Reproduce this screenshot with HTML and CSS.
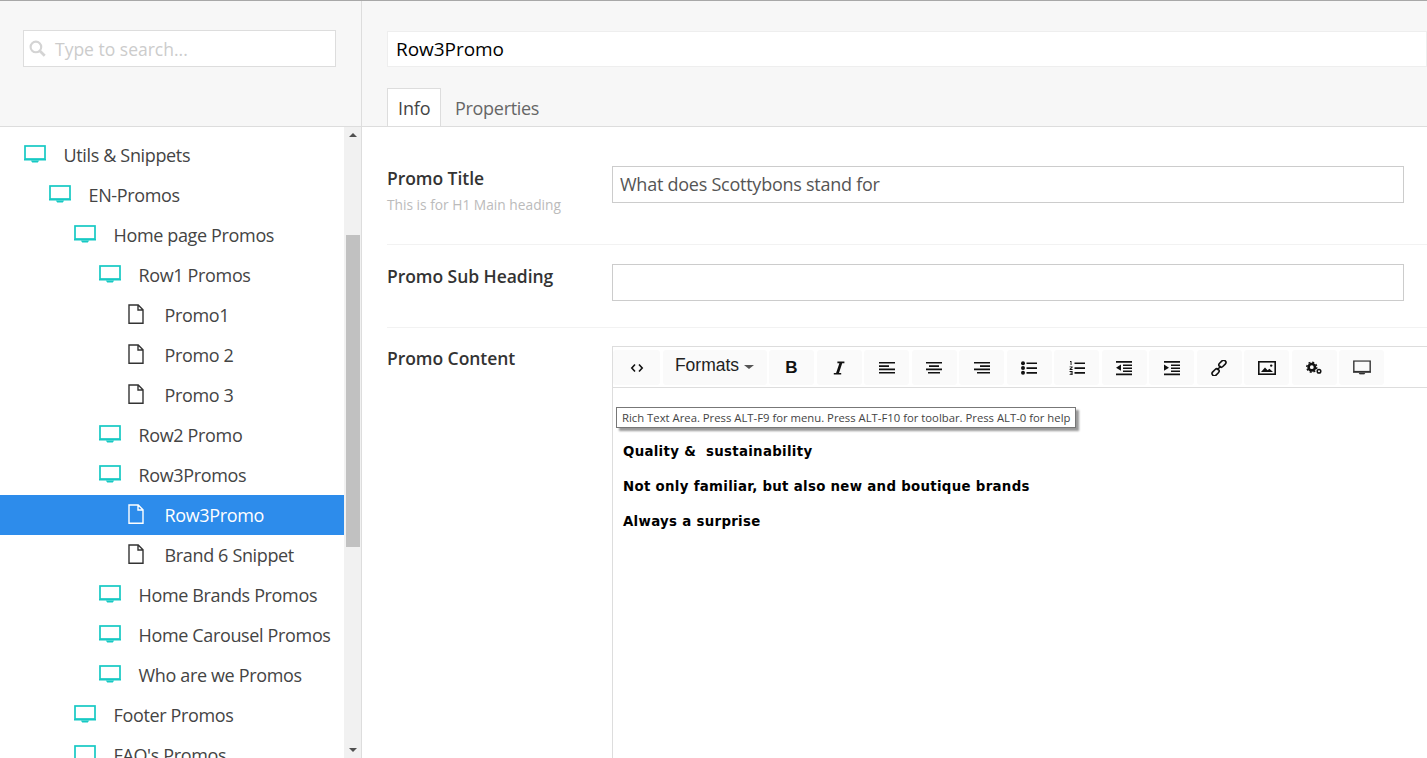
FILE: index.html
```html
<!DOCTYPE html>
<html lang="en">
<head>
<meta charset="utf-8">
<title>Row3Promo</title>
<link rel="stylesheet" href="styles.css">
</head>
<body>
<svg class="defs" width="0" height="0" aria-hidden="true">
  <defs>
    <symbol id="monitor" viewBox="0 0 22 18">
      <rect x="1" y="1" width="20" height="13" fill="none" stroke="currentColor" stroke-width="1.7"/>
      <path d="M0 14h22v1.4H0zM7 15.8h8l-1.2 1.8H8.2z" fill="currentColor"/>
    </symbol>
    <symbol id="file" viewBox="0 0 16 20">
      <path d="M1 1h9.2L15 5.8v13.4H1z M10 1v5h5" fill="none" stroke="currentColor" stroke-width="1.4"/>
    </symbol>
  </defs>
</svg>
<div class="app">
  <aside class="side">
    <div class="side-head">
      <div class="search">
        <svg class="search-icon" viewBox="0 0 16 16"><circle cx="6.5" cy="6.5" r="5" fill="none" stroke="currentColor" stroke-width="2"/><path d="M10.3 10.3l4.5 4.5" stroke="currentColor" stroke-width="2.6"/></svg>
        <span>Type to search...</span>
      </div>
    </div>
    <div class="tree-wrap">
      <ul class="tree">
        <li class="node l0"><svg class="ic-mon"><use href="#monitor"/></svg><span>Utils &amp; Snippets</span></li>
        <li class="node l1"><svg class="ic-mon"><use href="#monitor"/></svg><span>EN-Promos</span></li>
        <li class="node l2"><svg class="ic-mon"><use href="#monitor"/></svg><span>Home page Promos</span></li>
        <li class="node l3"><svg class="ic-mon"><use href="#monitor"/></svg><span>Row1 Promos</span></li>
        <li class="node l4"><svg class="ic-file"><use href="#file"/></svg><span>Promo1</span></li>
        <li class="node l4"><svg class="ic-file"><use href="#file"/></svg><span>Promo 2</span></li>
        <li class="node l4"><svg class="ic-file"><use href="#file"/></svg><span>Promo 3</span></li>
        <li class="node l3"><svg class="ic-mon"><use href="#monitor"/></svg><span>Row2 Promo</span></li>
        <li class="node l3"><svg class="ic-mon"><use href="#monitor"/></svg><span>Row3Promos</span></li>
        <li class="node l4 selected"><svg class="ic-file"><use href="#file"/></svg><span>Row3Promo</span></li>
        <li class="node l4"><svg class="ic-file"><use href="#file"/></svg><span>Brand 6 Snippet</span></li>
        <li class="node l3"><svg class="ic-mon"><use href="#monitor"/></svg><span>Home Brands Promos</span></li>
        <li class="node l3"><svg class="ic-mon"><use href="#monitor"/></svg><span>Home Carousel Promos</span></li>
        <li class="node l3"><svg class="ic-mon"><use href="#monitor"/></svg><span>Who are we Promos</span></li>
        <li class="node l2"><svg class="ic-mon"><use href="#monitor"/></svg><span>Footer Promos</span></li>
        <li class="node l2"><svg class="ic-mon"><use href="#monitor"/></svg><span>FAQ's Promos</span></li>
      </ul>
      <div class="scrollbar">
        <div class="arrow-up"></div>
        <div class="thumb"></div>
        <div class="arrow-down"></div>
      </div>
    </div>
  </aside>
  <main class="main">
    <header class="main-head">
      <div class="title-input">Row3Promo</div>
      <nav class="tabs">
        <div class="tab active">Info</div>
        <div class="tab">Properties</div>
      </nav>
    </header>
    <section class="form">
      <div class="row row-title">
        <div class="label">
          <div class="label-name">Promo Title</div>
          <div class="label-hint">This is for H1 Main heading</div>
        </div>
        <div class="input">What does Scottybons stand for</div>
      </div>
      <div class="row row-sub">
        <div class="label"><div class="label-name">Promo Sub Heading</div></div>
        <div class="input"></div>
      </div>
      <div class="row row-content">
        <div class="label"><div class="label-name">Promo Content</div></div>
        <div class="editor">
          <div class="toolbar">
            <div class="btn btn-code"><svg class="ti" viewBox="0 0 16 16"><path d="M6 4.5L2.8 8 6 11.5M10 4.5L13.2 8 10 11.5" fill="none" stroke="currentColor" stroke-width="1.6"/></svg></div>
            <div class="btn btn-formats"><span>Formats</span><i class="caret"></i></div>
            <div class="btn"><span class="ti-b">B</span></div>
            <div class="btn"><svg class="ti" viewBox="0 0 16 16"><path d="M6.4 1.5h7v1.7h-2.2L8 13h2.2v1.6H2.8V13h2.3L8.4 3.2h-2z" fill="currentColor"/></svg></div>
            <div class="btn"><svg class="ti" viewBox="0 0 16 16"><path d="M0 2h16v1.6H0zM0 5.3h10v1.6H0zM0 8.6h16v1.6H0zM0 11.9h16v1.6H0z" fill="currentColor"/></svg></div>
            <div class="btn"><svg class="ti" viewBox="0 0 16 16"><path d="M0 2h16v1.6H0zM3 5.3h10v1.6H3zM0 8.6h16v1.6H0zM2 11.9h12v1.6H2z" fill="currentColor"/></svg></div>
            <div class="btn"><svg class="ti" viewBox="0 0 16 16"><path d="M0 2h16v1.6H0zM6 5.3h10v1.6H6zM0 8.6h16v1.6H0zM3 11.9h13v1.6H3z" fill="currentColor"/></svg></div>
            <div class="btn"><svg class="ti" viewBox="0 0 16 16"><path d="M5.5 2.4H16v1.7H5.5zM5.5 7.2H16v1.7H5.5zM5.5 12H16v1.7H5.5z" fill="currentColor"/><circle cx="2" cy="3.2" r="2"/><circle cx="2" cy="8" r="2"/><circle cx="2" cy="12.8" r="2"/></svg></div>
            <div class="btn"><svg class="ti" viewBox="0 0 16 16"><path d="M5.5 2.4H16v1.7H5.5zM5.5 7.2H16v1.7H5.5zM5.5 12H16v1.7H5.5z" fill="currentColor"/><path d="M1 1h1.5v4H1.6V2H1zM.6 6.4h3v1L1.9 9h1.7v.9H.6V9l1.9-1.7H.6zM.6 11h3v4h-3v-.8h2v-.8H1.2v-.6h1.4v-.9h-2z" fill="currentColor"/></svg></div>
            <div class="btn"><svg class="ti" viewBox="0 0 16 16"><path d="M0 1h16v1.7H0zM7 4.4h9v1.7H7zM7 7.4h9v1.7H7zM7 10.4h9v1.7H7zM0 13.6h16v1.7H0zM5 4.6v6.2L0 7.7z" fill="currentColor"/></svg></div>
            <div class="btn"><svg class="ti" viewBox="0 0 16 16"><path d="M0 1h16v1.7H0zM7 4.4h9v1.7H7zM7 7.4h9v1.7H7zM7 10.4h9v1.7H7zM0 13.6h16v1.7H0zM0 4.6v6.2l5-3.1z" fill="currentColor"/></svg></div>
            <div class="btn"><svg class="ti" viewBox="0 0 16 16"><g fill="none" stroke="currentColor" stroke-width="1.6"><rect x="7.4" y="1.4" width="8" height="4.6" rx="2.3" transform="rotate(-45 11.4 3.7)"/><rect x=".6" y="10" width="8" height="4.6" rx="2.3" transform="rotate(-45 4.6 12.3)"/><path d="M6 10l4-4"/></g></svg></div>
            <div class="btn"><svg class="ti ti-img" viewBox="0 0 18 14"><rect x=".8" y=".8" width="16.4" height="12.4" fill="none" stroke="currentColor" stroke-width="1.6"/><path d="M3 11l4-4.6 2.6 2.8 1.8-1.4L15 11z" fill="currentColor"/><circle cx="13.2" cy="4.6" r="1.2" fill="currentColor"/></svg></div>
            <div class="btn"><svg class="ti" viewBox="0 0 16 16"><circle cx="5.8" cy="7.2" r="3.2" fill="none" stroke="currentColor" stroke-width="2.6"/><circle cx="5.8" cy="7.2" r="5" fill="none" stroke="currentColor" stroke-width="1.4" stroke-dasharray="2 1.9"/><circle cx="13" cy="11.2" r="1.8" fill="none" stroke="currentColor" stroke-width="1.5"/></svg></div>
            <div class="btn"><svg class="ti ti-mon" viewBox="0 0 22 18"><use href="#monitor"/></svg></div>
          </div>
          <div class="editor-body">
            <div class="tooltip">Rich Text Area. Press ALT-F9 for menu. Press ALT-F10 for toolbar. Press ALT-0 for help</div>
            <p>Quality &amp;&nbsp; sustainability</p>
            <p>Not only familiar, but also new and boutique brands</p>
            <p>Always a surprise</p>
          </div>
        </div>
      </div>
    </section>
  </main>
</div>
</body>
</html>
```

FILE: styles.css
```css
* { box-sizing: border-box; }
html, body { margin: 0; height: 100%; overflow: hidden; }
body { font-family: "Open Sans", sans-serif; color: #333; background: #fff; border-top: 1px solid #a8a8a8; }
.defs { position: absolute; }
.app { display: flex; height: 757px; }

/* sidebar */
.side { width: 362px; flex: none; border-right: 1px solid #ddd; display: flex; flex-direction: column; }
.side-head { height: 126px; flex: none; background: #f7f7f7; border-bottom: 1px solid #ddd; padding: 29px 25px 0 23px; }
.search { height: 37px; border: 1px solid #ddd; background: #fff; display: flex; align-items: center; padding-left: 5px; color: #ccc; font-size: 17.5px; }
.search-icon { width: 17px; height: 17px; margin-right: 9px; color: #d4d4d4; }
.tree-wrap { flex: 1; min-height: 0; display: flex; }
.tree { flex: 1; list-style: none; margin: 0; padding: 8px 0 0; overflow: hidden; }
.node { height: 40px; display: flex; align-items: center; font-size: 18px; color: #444; white-space: nowrap; }
.node span { letter-spacing: -0.35px; }
.l0 { padding-left: 24px; }
.l1 { padding-left: 49px; }
.l2 { padding-left: 74px; }
.l3 { padding-left: 99px; }
.l4 { padding-left: 128px; }
.ic-mon { width: 22px; height: 18px; margin-right: 17.5px; color: #16c9c4; flex: none; position: relative; top: -1px; }
.ic-file { width: 16px; height: 20px; margin-right: 20.5px; color: #333; flex: none; position: relative; top: -1px; }
.selected { background: #2d8ceb; color: #fff; }
.selected .ic-file { color: #fff; }
.scrollbar { width: 17px; flex: none; background: #f1f1f1; display: flex; flex-direction: column; align-items: center; }
.arrow-up { margin-top: 6px; border: 4px solid transparent; border-top: 0; border-bottom: 4px solid #505050; }
.thumb { width: 14px; height: 312px; background: #c1c1c1; margin-top: 98px; margin-left: 1px; }
.arrow-down { margin-top: auto; margin-bottom: 6px; border: 4px solid transparent; border-bottom: 0; border-top: 4px solid #505050; }

/* main */
.main { flex: 1; min-width: 0; display: flex; flex-direction: column; }
.main-head { height: 126px; flex: none; background: #f7f7f7; border-bottom: 1px solid #ddd; padding: 30px 0 0 25px; display: flex; flex-direction: column; }
.title-input { height: 37px; background: #fff; border: 1px solid #eee; font-size: 19px; font-weight: 500; line-height: 34px; padding-left: 8px; color: #000; letter-spacing: -0.05px; }
.tabs { display: flex; margin-top: 21px; height: 38px; }
.tab { font-size: 18px; line-height: 38px; padding: 0 13px; color: #666; letter-spacing: -0.3px; border: 1px solid transparent; border-bottom: 0; }
.tab.active { width: 54px; background: #fff; border-color: #ddd; color: #444; padding: 0 0 0 10px; letter-spacing: -0.1px; }

.form { flex: 1; min-height: 0; padding-left: 25px; overflow: hidden; }
.row { display: flex; }
.row-title { height: 118px; padding-top: 39px; border-bottom: 1px solid #f2f2f2; }
.row-sub { height: 83px; padding-top: 19px; border-bottom: 1px solid #f2f2f2; }
.row-content { padding-top: 18px; }
.label { width: 225px; flex: none; }
.label-name { font-size: 17.5px; font-weight: 600; line-height: 24px; color: #333; letter-spacing: -0.05px; }
.label-hint { font-size: 13.75px; line-height: 20px; color: #bbb; margin-top: 5px; }
.input { width: 792px; height: 37px; border: 1px solid #ccc; font-size: 18px; line-height: 35px; padding-left: 7px; color: #555; letter-spacing: -0.25px; }

/* editor */
.editor { width: 815px; flex: none; height: 420px; border-left: 1px solid #ddd; border-top: 1px solid #ddd; }
.toolbar { height: 41px; background: #fff; border-bottom: 1px solid #ddd; display: flex; padding: 3px 0 0 0; gap: 2.5px; color: #222; }
.btn { width: 45px; height: 35px; background: #fafafa; border-radius: 3px; display: flex; align-items: center; justify-content: center; color: #111; }
.btn-code { width: 47px; }
.btn-formats { width: 104px; font-family: "Liberation Sans", sans-serif; font-size: 17.5px; gap: 5px; color: #222; padding-bottom: 4px; }
.caret { width: 0; height: 0; border: 5px solid transparent; border-bottom: 0; border-top: 4px solid #555; margin-top: 3px; }
.ti { width: 16px; height: 16px; fill: currentColor; }
.ti-img { width: 18px; height: 14px; }
.ti-mon { width: 18px; height: 15px; color: #333; }
.ti-b { font-family: "Liberation Sans", sans-serif; font-weight: 700; font-size: 17px; line-height: 16px; }
.editor-body { position: relative; padding: 56px 0 0 10px; font-family: "DejaVu Sans", sans-serif; font-weight: 700; font-size: 13.33px; letter-spacing: 0.31px; color: #000; }
.editor-body p { margin: 0 0 19px; line-height: 16px; }
.tooltip { position: absolute; left: 3px; top: 19px; white-space: nowrap; background: #fff; border: 1px solid #777; box-shadow: 3px 3px 2px #999; font-family: "Open Sans", sans-serif; font-weight: 400; font-size: 11.3px; letter-spacing: 0; line-height: 19px; padding: 0 5px; color: #444; }
```
